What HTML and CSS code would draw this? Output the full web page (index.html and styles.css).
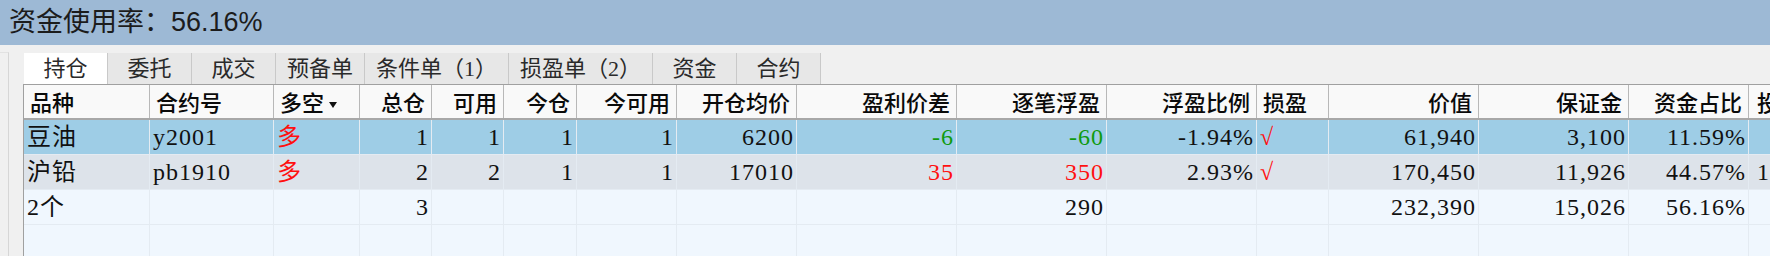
FILE: index.html
```html
<!DOCTYPE html>
<html lang="zh-CN">
<head>
    <meta charset="UTF-8">
    <title>持仓</title>
    <link rel="stylesheet" href="styles.css">
</head>
<body>

<!-- Barre du haut : taux d'utilisation -->
<div class="topbar">资金使用率：56.16%</div>

<div class="main">
    <div class="side"></div>

    <div class="panel">
        <!-- Onglets -->
        <div class="tabs">
            <div class="tab active">持仓</div>
            <div class="tab">委托</div>
            <div class="tab">成交</div>
            <div class="tab">预备单</div>
            <div class="tab">条件单（1）</div>
            <div class="tab">损盈单（2）</div>
            <div class="tab">资金</div>
            <div class="tab">合约</div>
        </div>

        <!-- Tableau des positions -->
        <div class="grid">
            <div class="row head">
                <div class="cell">品种</div>
                <div class="cell">合约号</div>
                <div class="cell">多空<span class="arrow"></span></div>
                <div class="cell">总仓</div>
                <div class="cell">可用</div>
                <div class="cell">今仓</div>
                <div class="cell">今可用</div>
                <div class="cell">开仓均价</div>
                <div class="cell">盈利价差</div>
                <div class="cell">逐笔浮盈</div>
                <div class="cell">浮盈比例</div>
                <div class="cell">损盈</div>
                <div class="cell">价值</div>
                <div class="cell">保证金</div>
                <div class="cell">资金占比</div>
                <div class="cell">投保</div>
            </div>

            <div class="row selected">
                <div class="cell">豆油</div>
                <div class="cell">y2001</div>
                <div class="cell red">多</div>
                <div class="cell">1</div>
                <div class="cell">1</div>
                <div class="cell">1</div>
                <div class="cell">1</div>
                <div class="cell">6200</div>
                <div class="cell green">-6</div>
                <div class="cell green">-60</div>
                <div class="cell">-1.94%</div>
                <div class="cell red">√</div>
                <div class="cell">61,940</div>
                <div class="cell">3,100</div>
                <div class="cell">11.59%</div>
                <div class="cell"></div>
            </div>

            <div class="row alt">
                <div class="cell">沪铅</div>
                <div class="cell">pb1910</div>
                <div class="cell red">多</div>
                <div class="cell">2</div>
                <div class="cell">2</div>
                <div class="cell">1</div>
                <div class="cell">1</div>
                <div class="cell">17010</div>
                <div class="cell red">35</div>
                <div class="cell red">350</div>
                <div class="cell">2.93%</div>
                <div class="cell red">√</div>
                <div class="cell">170,450</div>
                <div class="cell">11,926</div>
                <div class="cell">44.57%</div>
                <div class="cell">1</div>
            </div>

            <div class="row">
                <div class="cell">2个</div>
                <div class="cell"></div>
                <div class="cell"></div>
                <div class="cell">3</div>
                <div class="cell"></div>
                <div class="cell"></div>
                <div class="cell"></div>
                <div class="cell"></div>
                <div class="cell"></div>
                <div class="cell">290</div>
                <div class="cell"></div>
                <div class="cell"></div>
                <div class="cell">232,390</div>
                <div class="cell">15,026</div>
                <div class="cell">56.16%</div>
                <div class="cell"></div>
            </div>

            <div class="row">
                <div class="cell"></div>
                <div class="cell"></div>
                <div class="cell"></div>
                <div class="cell"></div>
                <div class="cell"></div>
                <div class="cell"></div>
                <div class="cell"></div>
                <div class="cell"></div>
                <div class="cell"></div>
                <div class="cell"></div>
                <div class="cell"></div>
                <div class="cell"></div>
                <div class="cell"></div>
                <div class="cell"></div>
                <div class="cell"></div>
                <div class="cell"></div>
            </div>
        </div>
    </div>
</div>

</body>
</html>
```

FILE: styles.css
```css
body {
    margin: 0;
    background: #f0f0f0;
    overflow: hidden;
    height: 256px;
}

.topbar {
    height: 45px;
    line-height: 45px;
    padding-left: 9px;
    background: #9db9d5;
    color: #1c1c1c;
    font-family: "Liberation Sans", "Noto Sans CJK SC", sans-serif;
    font-size: 27px;
}

.main {
    display: flex;
    height: 211px;
}

.side {
    width: 8px;
    margin-top: 7px;
    border-right: 1px solid #d6d6d6;
    border-top: 1px solid #e2e2e2;
    flex-shrink: 0;
}

.panel {
    margin-left: 14px;
    padding-top: 8px;
    flex-shrink: 0;
}

/* Onglets */
.tabs {
    display: flex;
    height: 31px;
    margin-left: 1px;
}

.tab {
    min-width: 84px;
    padding: 0 11px;
    box-sizing: border-box;
    border-right: 1px solid #c9c9c9;
    background: #e7e7e7;
    color: #2a2a2a;
    font-family: "Liberation Serif", "Noto Sans CJK SC", serif;
    font-size: 22px;
    line-height: 31px;
    text-align: center;
    white-space: nowrap;
}

.tab.active {
    background: #ffffff;
}

/* Tableau */
.grid {
    border-top: 1px solid #a0a0a0;
    border-left: 1px solid #a0a0a0;
    background: #f0f7fe;
    height: 180px;
}

.row {
    display: grid;
    grid-template-columns: 126px 124px 86px 72px 72px 73px 100px 120px 160px 150px 150px 72px 150px 150px 120px 120px;
    height: 35px;
    box-sizing: border-box;
    border-bottom: 1px solid #e4ebf2;
    background: #f0f7fe;
}

.cell {
    box-sizing: border-box;
    border-right: 1px solid #e4ebf2;
    padding: 0 3px;
    font-family: "Liberation Serif", "Noto Sans CJK SC", serif;
    font-size: 24px;
    letter-spacing: 1px;
    line-height: 34px;
    color: #111111;
    white-space: nowrap;
    overflow: hidden;
}

/* colonnes numériques alignées à droite */
.cell:nth-child(n+4):nth-child(-n+11),
.cell:nth-child(n+13):nth-child(-n+15) {
    text-align: right;
    padding-right: 2px;
}

.cell:nth-child(16) {
    padding-left: 8px;
}

.row.selected {
    background: #9ecde6;
}

.row.alt {
    background: #dde3ea;
}

.row.head {
    background: #f9f9f9;
    border-bottom: 2px solid #a8a8a8;
}

.row.head .cell {
    padding: 0 6px;
    border-right: 1px solid #b8b8b8;
    font-family: "Noto Sans CJK SC", sans-serif;
    font-size: 22px;
    font-weight: 500;
    letter-spacing: 0;
    line-height: 33px;
    color: #0a0a0a;
}

.row.head .cell:nth-child(16) {
    padding-left: 8px;
}

.arrow {
    display: inline-block;
    margin-left: 5px;
    vertical-align: middle;
    border-left: 4px solid transparent;
    border-right: 4px solid transparent;
    border-top: 6px solid #111111;
}

.red {
    color: #ff1010;
}

.green {
    color: #0f9a0f;
}
```
